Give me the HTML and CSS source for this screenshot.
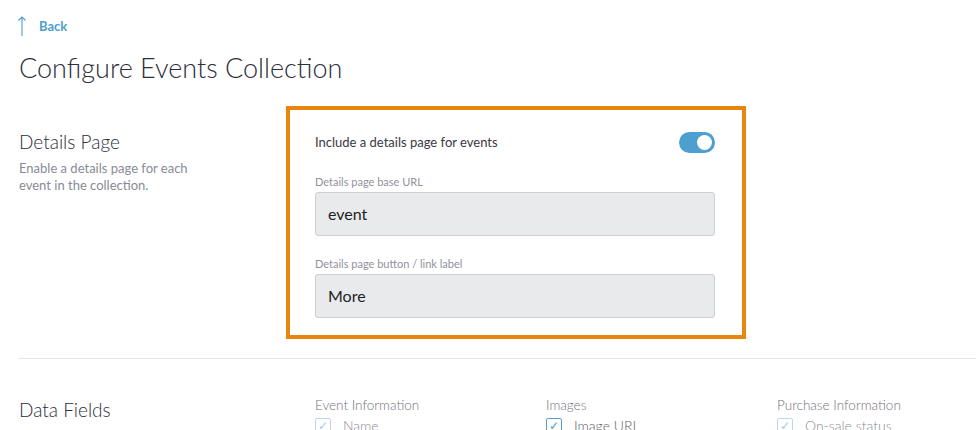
FILE: index.html
```html
<!DOCTYPE html>
<html>
	<head>
		<meta charset="utf-8" />
		<title>Configure Events Collection</title>
		<link rel="stylesheet" href="styles.css">
	</head>
	<body>
		<div class="page">
			<a class="back" href="#">
				<svg class="back-arrow" width="10" height="22" viewBox="0 0 10 22">
					<path d="M5 21V2M1.5 5.5L5 2l3.5 3.5" fill="none" stroke="#4d9fcf" stroke-width="1.1"/>
				</svg>
				<span>Back</span>
			</a>
			<h1 class="title">Configure Events Collection</h1>

			<div class="section">
				<div class="side">
					<h2>Details Page</h2>
					<p>Enable a details page for each event in the collection.</p>
				</div>
				<div class="box">
					<div class="toggle-row">
						<span>Include a details page for events</span>
						<div class="toggle"><div class="knob"></div></div>
					</div>
					<label class="field-label">Details page base URL</label>
					<div class="input">event</div>
					<label class="field-label">Details page button / link label</label>
					<div class="input">More</div>
				</div>
			</div>

			<div class="divider"></div>

			<div class="section fields">
				<div class="side">
					<h2>Data Fields</h2>
				</div>
				<div class="cols">
					<div class="col">
						<div class="col-title">Event Information</div>
						<div class="check dim"><span class="box-check">&#10003;</span>Name</div>
					</div>
					<div class="col">
						<div class="col-title">Images</div>
						<div class="check"><span class="box-check">&#10003;</span>Image URL</div>
					</div>
					<div class="col">
						<div class="col-title">Purchase Information</div>
						<div class="check dim"><span class="box-check">&#10003;</span>On-sale status</div>
					</div>
				</div>
			</div>
		</div>
	</body>
</html>
```

FILE: styles.css
```css
body{
	margin: 0;
	font-family: Lato, "Noto Sans", sans-serif;
	color: #2c2e3b;
	background: #fff;
	overflow: hidden;
}

.page{
	padding: 14px 0 0 19px;
}

.back{
	display: flex;
	align-items: center;
	text-decoration: none;
	color: #4d9fcf;
	font-size: 13px;
	font-weight: bold;
	height: 22px;
	margin-top: 1px;
}

.back-arrow{
	margin-right: 12px;
	margin-left: -2px;
}

.title{
	font-size: 27px;
	font-weight: 300;
	margin: 15px 0 0 0;
	line-height: 32px;
}

.section{
	display: flex;
	margin-top: 22px;
}

.side{
	width: 267px;
	flex-shrink: 0;
}

.side h2{
	font-size: 19px;
	font-weight: 300;
	margin: 24px 0 0 0;
	line-height: 24px;
}

.side p{
	font-size: 13px;
	color: #888b96;
	line-height: 17px;
	margin: 6px 0 0 0;
	width: 190px;
}

.box{
	width: 400px;
	flex-shrink: 0;
	border: 4px solid #e8850c;
	padding: 17px 27px 17px 25px;
}

.toggle-row{
	display: flex;
	justify-content: space-between;
	align-items: center;
	font-size: 13px;
	color: #3a3742;
	height: 30px;
}

.toggle{
	width: 36px;
	height: 21px;
	border-radius: 11px;
	background: #4d9fcf;
	position: relative;
}

.knob{
	position: absolute;
	right: 3px;
	top: 3px;
	width: 15px;
	height: 15px;
	border-radius: 50%;
	background: #fff;
}

.field-label{
	display: block;
	font-size: 11px;
	color: #8f929b;
	margin-top: 18px;
	line-height: 14px;
}

.input{
	margin-top: 3px;
	height: 42px;
	line-height: 42px;
	background: #e9eaec;
	border: 1px solid #cdcfd3;
	border-radius: 3px;
	padding-left: 12px;
	font-size: 16px;
	color: #1d1e24;
}

.input + .field-label{
	margin-top: 21px;
}

.divider{
	margin-top: 19px;
	height: 1px;
	background: #e3e4e7;
}

.fields{
	margin-top: 37px;
}

.fields .side{
	width: 296px;
}

.fields .side h2{
	margin-top: 2px;
}

.cols{
	display: flex;
	flex-shrink: 0;
}

.col{
	width: 231px;
}

.col-title{
	font-size: 13.5px;
	font-weight: 300;
	color: #6f727d;
	line-height: 18px;
}

.check{
	display: flex;
	align-items: center;
	font-size: 14px;
	font-weight: 300;
	color: #5d606b;
	margin-top: 3px;
}

.box-check{
	width: 14px;
	height: 14px;
	border: 1px solid #4d9fcf;
	border-radius: 2px;
	color: #4d9fcf;
	font-size: 12px;
	line-height: 14px;
	text-align: center;
	margin-right: 12px;
}

.dim .box-check{
	border-color: #b9d7ea;
	color: #a6cde6;
}

.dim{
	color: #8a8d97;
}
```
